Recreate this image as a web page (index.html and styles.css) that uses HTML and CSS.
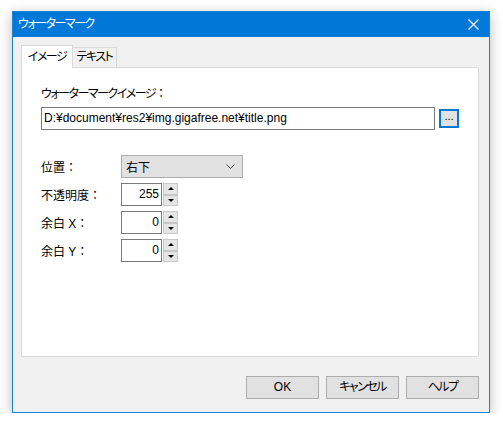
FILE: index.html
```html
<!DOCTYPE html>
<html lang="ja">
<head>
<meta charset="utf-8">
<link rel="stylesheet" href="styles.css">
</head>
<body>
<div class="window">
  <div class="titlebar">
    <span class="title k">ウォーターマーク</span>
    <svg class="close" width="11" height="11" viewBox="0 0 11 11"><path d="M0.5 0.5 L10.5 10.5 M10.5 0.5 L0.5 10.5" stroke="#fff" stroke-width="1.2" fill="none"/></svg>
  </div>
  <div class="content">
    <div class="tabs">
      <div class="tab active"><span class="k">イメージ</span></div>
      <div class="tab"><span class="k">テキスト</span></div>
    </div>
    <div class="panel">
      <div class="label-top"><span class="k">ウォーターマークイメージ</span>：</div>
      <div class="filerow">
        <div class="textbox">D:¥document¥res2¥img.gigafree.net¥title.png</div>
        <div class="browse">...</div>
      </div>
      <div class="rows">
        <div class="row">
          <div class="lbl">位置：</div>
          <div class="combo"><span>右下</span>
            <svg width="9" height="5" viewBox="0 0 9 5"><path d="M0.5 0.5 L4.5 4.5 L8.5 0.5" stroke="#444" stroke-width="1" fill="none"/></svg>
          </div>
        </div>
        <div class="row">
          <div class="lbl">不透明度：</div>
          <div class="num">255</div>
          <div class="spin"><div class="sb"><i class="up"></i></div><div class="sb"><i class="down"></i></div></div>
        </div>
        <div class="row">
          <div class="lbl">余白 X：</div>
          <div class="num">0</div>
          <div class="spin"><div class="sb"><i class="up"></i></div><div class="sb"><i class="down"></i></div></div>
        </div>
        <div class="row">
          <div class="lbl">余白 Y：</div>
          <div class="num">0</div>
          <div class="spin"><div class="sb"><i class="up"></i></div><div class="sb"><i class="down"></i></div></div>
        </div>
      </div>
    </div>
    <div class="buttons">
      <div class="btn">OK</div>
      <div class="btn"><span class="k">キャンセル</span></div>
      <div class="btn"><span class="k">ヘルプ</span></div>
    </div>
  </div>
</div>
</body>
</html>
```
FILE: styles.css
```css
html, body {
  margin: 0;
  padding: 0;
  background: #ffffff;
}
body {
  padding: 11px 0 0 12px;
  font-family: "Liberation Sans", "Noto Sans CJK JP", sans-serif;
  font-size: 12px;
  color: #000;
}
.k {
  font-feature-settings: "palt";
  letter-spacing: -1.5px;
}
.window {
  width: 476px;
  height: 400px;
  border: 1px solid #1883d7;
  background: #f0f0f0;
  box-shadow: 0 3px 12px rgba(0,0,0,0.28);
  display: flex;
  flex-direction: column;
}
.titlebar {
  height: 25px;
  background: #0078d7;
  display: flex;
  align-items: center;
  justify-content: space-between;
  padding: 0 10px 0 5px;
  color: #fff;
}
.title {
  font-size: 12px;
  line-height: 16px;
  margin-top: -1px;
}
.close {
  display: block;
  margin-top: -1px;
}
.content {
  flex: 1;
  padding: 8px 0 0 8px;
  display: flex;
  flex-direction: column;
}
.tabs {
  display: flex;
  align-items: flex-end;
  height: 23px;
  margin-bottom: -1px;
  position: relative;
  z-index: 1;
}
.tab {
  width: 45px;
  box-sizing: border-box;
  height: 21px;
  line-height: 19px;
  border: 1px solid #d9d9d9;
  background: #f0f0f0;
  text-align: center;
  margin-left: -1px;
  white-space: nowrap;
}
.tab.active {
  width: 52px;
  height: 23px;
  line-height: 22px;
  border-bottom: none;
  background: #fff;
  margin-left: 0;
  position: relative;
  z-index: 2;
}
.panel {
  border: 1px solid #d9d9d9;
  background: #fff;
  padding: 18px 0 0 19px;
  box-sizing: content-box;
  width: 437px;
  height: 270px;
}
.label-top {
  line-height: 16px;
  height: 16px;
}
.filerow {
  display: flex;
  align-items: center;
  margin-top: 5px;
  gap: 4px;
}
.textbox {
  height: 21px;
  border: 1px solid #7a7a7a;
  line-height: 21px;
  padding-left: 2px;
  box-sizing: content-box;
  width: 390px;
  white-space: nowrap;
  overflow: hidden;
}
.browse {
  width: 16px;
  height: 15px;
  border: 2px solid #0078d7;
  background: #e1e1e1;
  font-size: 11px;
  line-height: 11px;
  text-align: center;
  margin-top: -1px;
}
.rows {
  margin-top: 25px;
  display: flex;
  flex-direction: column;
  gap: 5px;
}
.row {
  display: flex;
  align-items: center;
  height: 23px;
}
.lbl {
  width: 80px;
}
.combo {
  border: 1px solid #adadad;
  background: #e1e1e1;
  display: flex;
  align-items: center;
  justify-content: space-between;
  padding: 0 7px 0 4px;
  box-sizing: border-box;
  height: 23px;
  width: 122px;
}
.combo svg {
  display: block;
}
.num {
  width: 41px;
  height: 23px;
  border: 1px solid #7a7a7a;
  box-sizing: border-box;
  text-align: right;
  line-height: 21px;
  padding-right: 2px;
}
.spin {
  display: flex;
  flex-direction: column;
  justify-content: space-between;
  height: 23px;
  margin-left: 1px;
}
.sb {
  width: 13px;
  height: 10px;
  border: 1px solid #c8c8c8;
  background: #e6e6e6;
  display: flex;
  align-items: center;
  justify-content: center;
}
.sb i {
  width: 0;
  height: 0;
  border-left: 3px solid transparent;
  border-right: 3px solid transparent;
}
.sb i.up {
  border-bottom: 3px solid #000;
}
.sb i.down {
  border-top: 3px solid #000;
}
.buttons {
  display: flex;
  justify-content: flex-end;
  gap: 7px;
  margin-top: 19px;
  width: 458px;
}
.btn {
  width: 73px;
  height: 23px;
  box-sizing: border-box;
  border: 1px solid #adadad;
  background: #e1e1e1;
  text-align: center;
  line-height: 21px;
}
```
